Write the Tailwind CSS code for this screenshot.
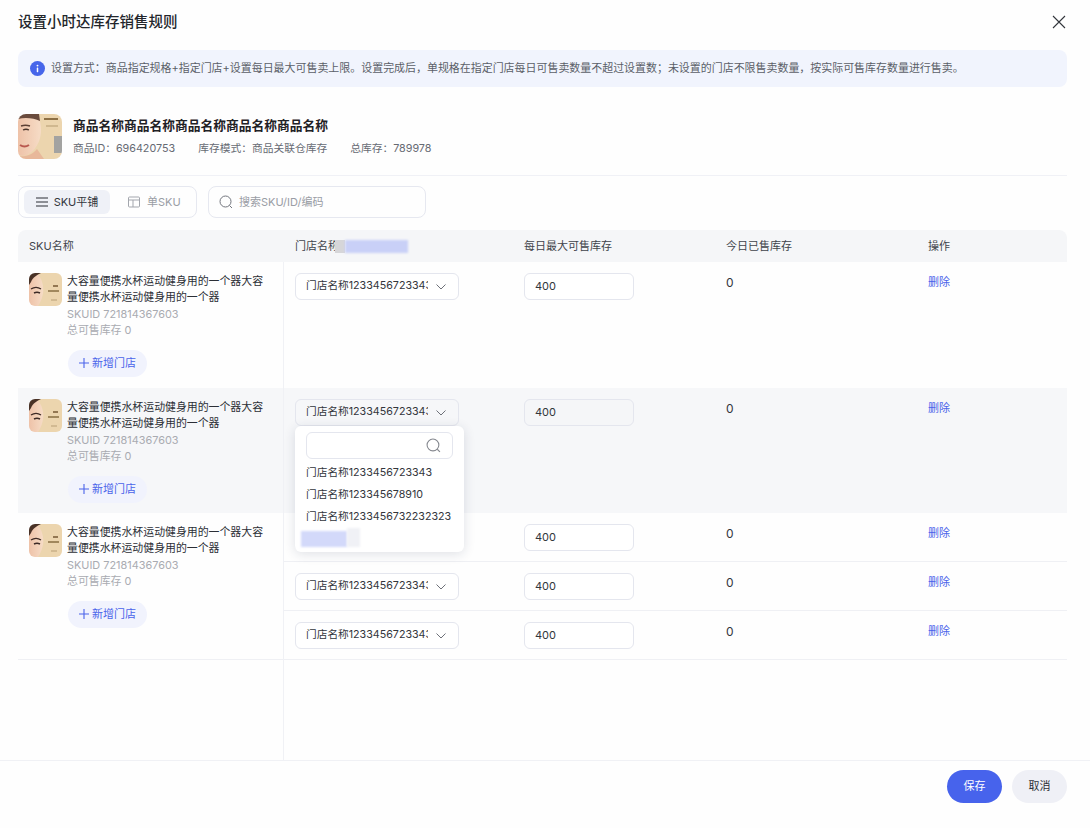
<!DOCTYPE html>
<html lang="zh-CN">
<head>
  <meta charset="UTF-8">
  <title>设置小时达库存销售规则</title>
  <script src="https://cdn.jsdelivr.net/npm/@tailwindcss/browser@4"></script>
</head>
<body class="bg-[#fefefe] text-[#2c2f36] font-['Inter','Noto_Sans_CJK_SC',sans-serif] w-[1090px] h-[828px] overflow-hidden relative">

  <div class="flex items-center justify-between pl-[18px] pr-[24px] h-[44px]">
    <h1 class="text-[14.5px] font-medium text-[#23262b]">设置小时达库存销售规则</h1>
    <svg class="w-[14px] h-[14px]" viewBox="0 0 14 14" fill="none" stroke="#33363c" stroke-width="1.1"><path d="M1 1l12 12M13 1L1 13"/></svg>
  </div>

  <div class="ml-[18px] mr-[23px] mt-[6px] h-[37px] rounded-lg bg-[#f1f4fd] flex items-center pl-[12px] gap-[6px] text-[10.96px] text-[#5b5f68] whitespace-nowrap">
    <svg class="w-[15px] h-[15px] shrink-0" viewBox="0 0 16 16"><circle cx="8" cy="8" r="8" fill="#4766ea"/><rect x="7.2" y="7" width="1.6" height="5" rx=".5" fill="#fff"/><circle cx="8" cy="4.9" r="1" fill="#fff"/></svg>
    <span>设置方式：商品指定规格+指定门店+设置每日最大可售卖上限。设置完成后，单规格在指定门店每日可售卖数量不超过设置数；未设置的门店不限售卖数量，按实际可售库存数量进行售卖。</span>
  </div>

  <div class="ml-[18px] mr-[23px] mt-[27px] pb-[16px] border-b border-[#f0f1f6] flex items-center gap-[11px]">
    <svg class="w-[44px] h-[45px] rounded-lg shrink-0" viewBox="0 0 44 45">
      <defs>
        <linearGradient id="skin" x1="0" y1="0" x2="1" y2="0"><stop offset="0" stop-color="#eec2a8"/><stop offset="1" stop-color="#f6dcc6"/></linearGradient>
        <filter id="soft"><feGaussianBlur stdDeviation="0.6"/></filter>
      </defs>
      <g filter="url(#soft)">
        <rect width="44" height="45" fill="#ecd5ae"/>
        <path d="M0 0h20c3 9 4 17 2 24-2 8-7 14-13 17-3 1-6 1-9 0z" fill="url(#skin)"/>
        <path d="M0 0h21l1 7C16 4 7 3 0 5z" fill="#6b4c3c"/>
        <path d="M3 12c3-1 6-1 9 0" stroke="#5b4034" stroke-width="1.4" fill="none"/>
        <path d="M5 16c2-1 4-1 6 0" stroke="#4a342c" stroke-width="1.3" fill="none"/>
        <path d="M2 31c3 2 6 2 9 0" stroke="#b9594f" stroke-width="2" fill="none"/>
        <path d="M0 42c8 1 14-1 19-7l7 10H0z" fill="#e8b89a"/>
        <rect x="36" y="22" width="8" height="17" fill="#a3a3a1"/>
        <path d="M26 5h14" stroke="#8d6f45" stroke-width="2"/>
        <path d="M28 12h12" stroke="#c2a97f" stroke-width="1.3"/>
      </g>
    </svg>
    <div>
      <div class="text-[12.75px] font-semibold text-[#1f2125] leading-[18px]">商品名称商品名称商品名称商品名称商品名称</div>
      <div class="flex gap-[23px] mt-[6px] text-[10.75px] leading-[16px] text-[#666a73]">
        <span>商品ID：696420753</span><span>库存模式：商品关联仓库存</span><span>总库存：789978</span>
      </div>
    </div>
  </div>

  <div class="mx-[18px] mt-[10px] flex gap-[11px]">
    <div class="w-[179px] h-[32px] rounded-lg border border-[#e6e8f0] flex items-center px-[5px] text-[11px]">
      <div class="w-[86px] h-[24px] rounded-md bg-[#eff1f7] flex items-center justify-center gap-[6px] text-[#33363c]">
        <svg class="w-[12px] h-[12px]" viewBox="0 0 12 12" stroke="#2c2f36" stroke-width="1.1"><path d="M0 2h12M0 6h12M0 10h12"/></svg>
        <span>SKU平铺</span>
      </div>
      <div class="flex-1 flex items-center pl-[18px] gap-[7px] text-[#9a9da5]">
        <svg class="w-[12px] h-[12px]" viewBox="0 0 12 12" fill="none" stroke="#a3a6ad"><rect x=".5" y="1" width="11" height="10" rx="1"/><path d="M.5 4h11M5 4v7"/></svg>
        <span>单SKU</span>
      </div>
    </div>
    <div class="w-[218px] h-[32px] rounded-lg border border-[#e6e8f0] flex items-center pl-[10px] gap-[6px] text-[11px] text-[#9a9da5]">
      <svg class="w-[14px] h-[14px]" viewBox="0 0 14 14" fill="none" stroke="#72757d" stroke-width="1"><circle cx="6.500" cy="6.500" r="5.500"/><path d="M10.500 10.500l2.500 2.500"/></svg>
      <span>搜索SKU/ID/编码</span>
    </div>
  </div>

  <div class="ml-[18px] mr-[23px] mt-[12px] h-[32px] rounded-t-lg bg-[#f5f6f8] grid grid-cols-[266px_240px_202px_202px_1fr] items-center text-[11px] text-[#41444b]">
    <div class="pl-[11px]">SKU名称</div>
    <div class="pl-[11px] relative">门店名称
      <span class="absolute left-[51px] top-[2px] w-[10px] h-[13px] bg-[#d6d6d9] blur-[0.5px]"></span>
      <span class="absolute left-[61px] top-[2px] w-[63px] h-[13px] bg-[#c9d0f7] blur-[0.8px]"></span>
    </div>
    <div>每日最大可售库存</div>
    <div>今日已售库存</div>
    <div>操作</div>
  </div>

  <div id="rows" class="ml-[18px] mr-[23px] h-[498px] relative"></div>

  <div class="border-t border-[#f0f1f5] h-[68px] flex items-start justify-end gap-[10px] pr-[23px] pt-[9px] text-[11px]">
    <button class="w-[55px] h-[33px] rounded-full bg-[#4763ec] text-white">保存</button>
    <button class="w-[55px] h-[33px] rounded-full bg-[#eff0f6] text-[#2c2f36]">取消</button>
  </div>

  <!-- 门店下拉 -->
  <div class="absolute left-[295px] top-[426px] w-[169px] h-[126px] rounded-md bg-white shadow-[0_2px_12px_rgba(30,40,80,0.14)] text-[10.7px] text-[#33363c] px-[11px] pt-[6px]">
    <div class="w-[147px] h-[27px] rounded-md border border-[#e4e6ee] flex items-center justify-end pr-[11px] mb-[3px]">
      <svg class="w-[15px] h-[15px]" viewBox="0 0 14 14" fill="none" stroke="#85888f" stroke-width="1"><circle cx="6.500" cy="6.500" r="5.500"/><path d="M10.500 10.500l2.500 2.500"/></svg>
    </div>
    <div class="h-[22px] leading-[22px]">门店名称1233456723343</div>
    <div class="h-[22px] leading-[22px]">门店名称123345678910</div>
    <div class="h-[22px] leading-[22px] whitespace-nowrap">门店名称1233456732232323</div>
    <span class="absolute left-[6px] top-[105px] w-[46px] h-[16px] bg-[#d3d9fa] blur-[1px]"></span>
    <span class="absolute left-[52px] top-[102px] w-[13px] h-[19px] bg-[#f0f1f6] blur-[1px]"></span>
  </div>

  <script>
    const thumb = `<svg class="w-[33px] h-[33px] rounded-md shrink-0" viewBox="0 0 33 33">
      <g filter="url(#soft)">
        <rect width="33" height="33" fill="#ecd5ae"/>
        <path d="M0 0h8c5 6 7 13 6 20-1 6-3 10-5 13H0z" fill="url(#skin)"/>
        <path d="M0 0h12C8 2 4 4 2 9L0 12z" fill="#4a3128"/>
        <path d="M2 16c3-2 7-2 10 0" stroke="#3d2a26" stroke-width="1.3" fill="none"/>
        <path d="M5 20c2-1 4-1 6 0" stroke="#3d2a26" stroke-width="1.6" fill="none"/>
        <path d="M24 13h5" stroke="#7d5f3a" stroke-width="1.6"/>
        <path d="M19 18h11" stroke="#8f7448" stroke-width="1.6"/>
        <path d="M22 27h6" stroke="#c2a97f" stroke-width="1.2"/>
      </g>
    </svg>`;

    const skuCell = `<div class="pl-[11px] pt-[11px] border-r border-[#f0f1f5]">
      <div class="flex gap-[5px]">
        ${thumb}
        <div class="w-[200px] text-[10.9px] leading-[16.4px]">
          <div class="text-[#2c2f36]">大容量便携水杯运动健身用的一个器大容量便携水杯运动健身用的一个器</div>
          <div class="text-[#a9abb1]">SKUID 721814367603</div>
          <div class="text-[#a9abb1]">总可售库存 0</div>
        </div>
      </div>
      <div class="ml-[39px] mt-[11px] w-[79px] h-[27px] rounded-full bg-[#f1f3fd] flex items-center justify-center gap-[3px] text-[11px] text-[#4a63ea]">
        <svg class="w-[10px] h-[10px]" viewBox="0 0 10 10" stroke="#4a63ea" stroke-width="1.1"><path d="M5 0v10M0 5h10"/></svg>
        <span>新增门店</span>
      </div>
    </div>`;

    function storeRow(border, shaded) {
      return `<div class="grid grid-cols-[240px_202px_202px_1fr] h-[49px] ${border ? 'border-b border-[#eff0f4]' : ''}">
        <div class="pl-[11px] pt-[11px]">
          <div class="w-[164px] h-[27px] rounded-md border border-[#e4e6ee] flex items-center pl-[10px] pr-[12px] text-[10.7px] text-[#33363c] ${shaded ? 'bg-[#f6f7f9]' : 'bg-white'}">
            <span class="w-[122px] overflow-hidden whitespace-nowrap">门店名称1233456723343</span>
            <svg class="w-[10px] h-[6px] ml-auto" viewBox="0 0 10 6" fill="none" stroke="#6d7078"><path d="M.5.5L5 5 9.500.5"/></svg>
          </div>
        </div>
        <div class="pt-[11px]">
          <div class="w-[110px] h-[27px] rounded-md border border-[#e4e6ee] flex items-center pl-[10px] text-[11px] text-[#33363c] ${shaded ? 'bg-[#f5f6f8]' : 'bg-white'}">400</div>
        </div>
        <div class="pt-[12px] text-[12px] text-[#33363c] leading-[18px]">0</div>
        <div class="pt-[12px] text-[11px] text-[#4a63ea] leading-[16px]">删除</div>
      </div>`;
    }

    const groups = [
      { h: 'h-[126px]', bg: '', stores: 1 },
      { h: 'h-[125px]', bg: 'bg-[#f6f7f9]', stores: 1, shaded: true },
      { h: 'h-[147px]', bg: '', stores: 3 }
    ];

    document.getElementById('rows').innerHTML = groups.map(g => {
      let list = '';
      for (let i = 0; i < g.stores; i++) list += storeRow(g.stores > 1, g.shaded);
      return `<div class="grid grid-cols-[266px_1fr] ${g.h} ${g.bg} ${g.stores > 1 ? 'border-b border-[#eff0f4]' : ''}">${skuCell}<div>${list}</div></div>`;
    }).join('') + `<div class="h-[100px] w-[266px] border-r border-[#f0f1f5]"></div>`;
  </script>
</body>
</html>
